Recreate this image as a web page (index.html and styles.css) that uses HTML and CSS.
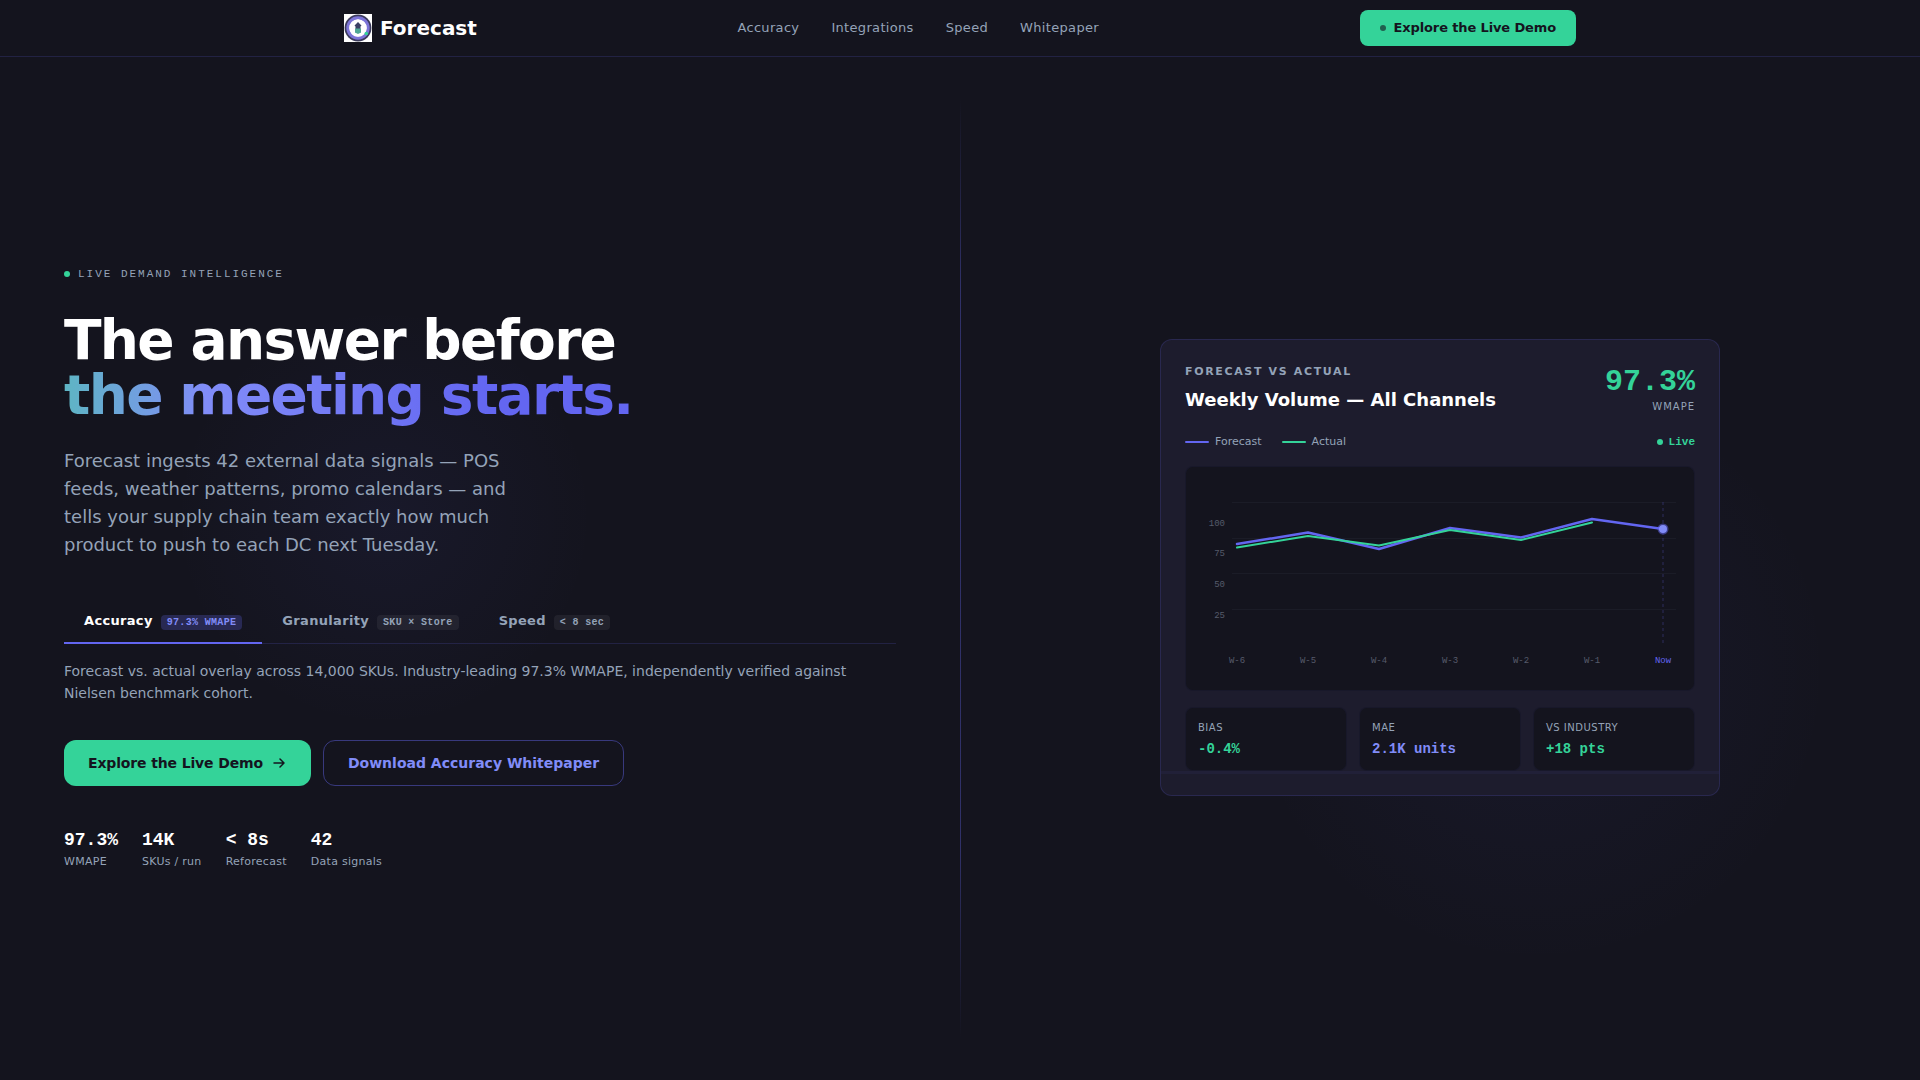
FILE: index.html
```
<!DOCTYPE html>
<html lang="en">
<head>
  <meta charset="UTF-8" />
  <meta name="viewport" content="width=device-width, initial-scale=1.0" />
  <title>Forecast</title>
  <link rel="stylesheet" href="styles.css">
</head>
<body>
  <header class="nav">
    <div class="nav-inner">
      <a href="#" class="brand">
        <svg class="logo" viewBox="0 0 28 28" aria-hidden="true">
          <rect width="28" height="28" fill="#ffffff"/>
          <circle cx="14" cy="14" r="13.4" fill="#3b3b5c"/>
          <circle cx="14" cy="14" r="10.2" fill="#ffffff" stroke="#7c74d8" stroke-width="3"/>
          <circle cx="14" cy="14" r="8.6" fill="#ffffff"/>
          <path d="M14 8l3.500 3.500-1 1v6h-5v-6l-1-1z" fill="#3b4064"/>
          <path d="M11 14.500h6v4L14 20l-3-1.500z" fill="#4fa896"/>
          <circle cx="22.300" cy="19.500" r="1.800" fill="#34d399"/>
        </svg>
        <span>Forecast</span>
      </a>
      <nav class="nav-links">
        <a href="#accuracy">Accuracy</a>
        <a href="#integrations">Integrations</a>
        <a href="#speed">Speed</a>
        <a href="#whitepaper">Whitepaper</a>
      </nav>
      <button class="nav-cta" type="button"><i class="cta-dot"></i>Explore the Live Demo</button>
    </div>
  </header>

  <main class="hero">
    <section class="hero-left">
      <div class="eyebrow"><i class="dot"></i>LIVE DEMAND INTELLIGENCE</div>
      <h1>The answer before<br><span class="gradient">the meeting starts.</span></h1>
      <p class="lead">Forecast ingests 42 external data signals — POS feeds, weather patterns, promo calendars — and tells your supply chain team exactly how much product to push to each DC next Tuesday.</p>

      <div class="tabs" role="tablist">
        <button class="tab active" type="button" role="tab" aria-selected="true">Accuracy<span class="badge">97.3% WMAPE</span></button>
        <button class="tab" type="button" role="tab" aria-selected="false">Granularity<span class="badge">SKU × Store</span></button>
        <button class="tab" type="button" role="tab" aria-selected="false">Speed<span class="badge">&lt; 8 sec</span></button>
      </div>
      <p class="tab-text">Forecast vs. actual overlay across 14,000 SKUs. Industry-leading 97.3% WMAPE, independently verified against Nielsen benchmark cohort.</p>

      <div class="actions">
        <button class="btn primary" type="button">Explore the Live Demo
          <svg width="16" height="16" viewBox="0 0 16 16" fill="none" stroke="currentColor" stroke-width="1.500" stroke-linecap="round" stroke-linejoin="round" aria-hidden="true"><path d="M3 8h10M9 4l4 4-4 4"/></svg>
        </button>
        <button class="btn outline" type="button">Download Accuracy Whitepaper</button>
      </div>

      <dl class="stats">
        <div><dd>97.3%</dd><dt>WMAPE</dt></div>
        <div><dd>14K</dd><dt>SKUs / run</dt></div>
        <div><dd>&lt; 8s</dd><dt>Reforecast</dt></div>
        <div><dd>42</dd><dt>Data signals</dt></div>
      </dl>
    </section>

    <section class="hero-right">
      <article class="card">
        <div class="card-head">
          <div>
            <div class="card-label">FORECAST VS ACTUAL</div>
            <h2>Weekly Volume — All Channels</h2>
          </div>
          <div class="score">
            <strong>97.3%</strong>
            <span>WMAPE</span>
          </div>
        </div>

        <div class="legend">
          <span class="key"><i class="line forecast"></i>Forecast</span>
          <span class="key"><i class="line actual"></i>Actual</span>
          <span class="live"><i class="dot"></i>Live</span>
        </div>

        <div class="chart">
          <svg viewBox="0 0 508 223" role="img" aria-label="Forecast and actual volume by week">
            <g class="grid">
              <path d="M46 35.500H490M46 71.500H490M46 106.500H490M46 142.500H490"/>
            </g>
            <path class="now-line" d="M477 35V179"/>
            <g class="y-axis">
              <text x="39" y="59">100</text>
              <text x="39" y="89">75</text>
              <text x="39" y="120">50</text>
              <text x="39" y="151">25</text>
            </g>
            <g class="x-axis">
              <text x="51" y="196">W-6</text>
              <text x="122" y="196">W-5</text>
              <text x="193" y="196">W-4</text>
              <text x="264" y="196">W-3</text>
              <text x="335" y="196">W-2</text>
              <text x="406" y="196">W-1</text>
              <text class="now" x="477" y="196">Now</text>
            </g>
            <polyline class="series forecast" points="51,77 122,65.500 193,82 264,61 335,70.500 406,52 477,62"/>
            <polyline class="series actual" points="51,80.500 122,69 193,78.500 264,63 335,73 406,55.500"/>
            <circle class="halo" cx="477" cy="62" r="5.500"/>
            <circle class="point" cx="477" cy="62" r="4"/>
          </svg>
        </div>

        <dl class="metrics">
          <div><dt>BIAS</dt><dd>-0.4%</dd></div>
          <div><dt>MAE</dt><dd class="violet">2.1K units</dd></div>
          <div><dt>VS INDUSTRY</dt><dd>+18 pts</dd></div>
        </dl>
      </article>
    </section>
  </main>
</body>
</html>
```
FILE: styles.css
```
:root {
  --bg: #14141e;
  --card: #1d1c2d;
  --green: #34d399;
  --indigo: #6366f1;
  --violet: #818cf8;
  --muted: #94a3b8;
  --border: rgba(99, 102, 241, 0.18);
  --sans: "DejaVu Sans", sans-serif;
  --mono: "Liberation Mono", monospace;
}

* {
  box-sizing: border-box;
  margin: 0;
  padding: 0;
}

body {
  min-height: 100vh;
  display: flex;
  flex-direction: column;
  background: var(--bg);
  color: #ffffff;
  font-family: var(--sans);
}

a {
  color: inherit;
  text-decoration: none;
}

button {
  border: none;
  background: none;
  color: inherit;
  font-family: inherit;
  cursor: pointer;
}

/* Navigation */
.nav {
  border-bottom: 1px solid var(--border);
}

.nav-inner {
  max-width: 1280px;
  height: 56px;
  margin: 0 auto;
  padding: 0 24px;
  display: flex;
  align-items: center;
  justify-content: space-between;
}

.brand {
  display: flex;
  align-items: center;
  gap: 8px;
  font-size: 20px;
  font-weight: 700;
}

.logo {
  width: 28px;
  height: 28px;
}

.nav-links {
  display: flex;
  gap: 32px;
  color: var(--muted);
  font-size: 13px;
  line-height: 18px;
  letter-spacing: 0.025em;
}

.nav-cta {
  display: flex;
  align-items: center;
  gap: 8px;
  height: 36px;
  padding: 0 20px;
  border-radius: 8px;
  background: var(--green);
  color: var(--bg);
  font-size: 13px;
  font-weight: 700;
  line-height: 18px;
  letter-spacing: -0.01em;
}

.cta-dot {
  width: 6px;
  height: 6px;
  border-radius: 50%;
  background: var(--bg);
  opacity: 0.6;
}

/* Hero */
.hero {
  flex: 1;
  display: grid;
  grid-template-columns: 1fr 1fr;
  position: relative;
  background:
    radial-gradient(circle 300px at 20% 45%, rgba(99, 102, 241, 0.06), transparent 70%),
    radial-gradient(circle 420px at 80% 60%, rgba(99, 102, 241, 0.06), transparent 70%);
}

.hero::after {
  content: "";
  position: absolute;
  top: 4%;
  bottom: 4%;
  left: 50%;
  width: 1px;
  background: linear-gradient(transparent, rgba(99, 102, 241, 0.35) 20%, rgba(99, 102, 241, 0.35) 80%, transparent);
}

.hero-left {
  display: flex;
  flex-direction: column;
  justify-content: center;
  padding: 48px 64px 49px;
}

.hero-right {
  display: flex;
  align-items: center;
  justify-content: center;
  padding: 48px 64px 50px;
}

.dot {
  width: 6px;
  height: 6px;
  border-radius: 50%;
  background: var(--green);
}

.eyebrow {
  display: flex;
  align-items: center;
  gap: 8px;
  margin-bottom: 32px;
  color: var(--muted);
  font-family: var(--mono);
  font-size: 11px;
  line-height: 14px;
  letter-spacing: 0.18em;
}

h1 {
  margin-bottom: 24px;
  font-size: 55px;
  font-weight: 700;
  line-height: 55px;
  letter-spacing: -0.03em;
}

.gradient {
  background: linear-gradient(90deg, #5eb5c4, #818cf8 25%, #6366f1 75%);
  -webkit-background-clip: text;
  background-clip: text;
  color: transparent;
}

.lead {
  max-width: 460px;
  margin-bottom: 41px;
  color: var(--muted);
  font-size: 18px;
  line-height: 28px;
}

.tabs {
  display: flex;
  border-bottom: 1px solid var(--border);
}

.tab {
  display: flex;
  align-items: baseline;
  gap: 8px;
  margin-bottom: -1px;
  padding: 12px 20px;
  border-bottom: 2px solid transparent;
  color: var(--muted);
  font-size: 13px;
  font-weight: 700;
  line-height: 18px;
  letter-spacing: 0.025em;
}

.tab.active {
  border-bottom-color: var(--indigo);
  color: #ffffff;
}

.badge {
  padding: 0 6px;
  border-radius: 4px;
  background: rgba(255, 255, 255, 0.06);
  font-family: var(--mono);
  font-size: 10px;
  line-height: 15px;
}

.tab.active .badge {
  background: rgba(99, 102, 241, 0.25);
  color: var(--violet);
}

.tab-text {
  padding: 16px 0 36px;
  color: var(--muted);
  font-size: 14px;
  line-height: 22px;
}

.actions {
  display: flex;
  gap: 12px;
  margin-bottom: 40px;
}

.btn {
  display: flex;
  align-items: center;
  gap: 8px;
  height: 46px;
  padding: 0 24px;
  border-radius: 12px;
  font-size: 14px;
  font-weight: 700;
}

.btn.primary {
  background: var(--green);
  color: var(--bg);
  letter-spacing: -0.01em;
}

.btn.outline {
  border: 1px solid rgba(99, 102, 241, 0.45);
  color: var(--violet);
}

.stats {
  display: flex;
  gap: 24px;
}

.stats dd {
  font-family: var(--mono);
  font-size: 18px;
  font-weight: 700;
  line-height: 28px;
}

.stats dt {
  color: var(--muted);
  font-size: 11px;
  line-height: 16px;
  letter-spacing: 0.025em;
}

/* Forecast card */
.card {
  position: relative;
  width: 100%;
  max-width: 560px;
  padding: 24px;
  border: 1px solid var(--border);
  border-radius: 12px;
  background: var(--card);
}

.card::after {
  content: "";
  position: absolute;
  right: 0;
  bottom: 21px;
  left: 0;
  height: 3px;
  background: rgba(99, 102, 241, 0.06);
}

.card-head {
  display: flex;
  justify-content: space-between;
  margin-bottom: 20px;
}

.card-label {
  margin-bottom: 8px;
  color: var(--muted);
  font-size: 11px;
  font-weight: 700;
  line-height: 16px;
  letter-spacing: 0.15em;
}

h2 {
  font-size: 18px;
  line-height: 24px;
}

.score {
  text-align: right;
}

.score strong {
  display: block;
  color: var(--green);
  font-family: var(--mono);
  font-size: 30px;
  line-height: 36px;
}

.score span {
  display: block;
  color: var(--muted);
  font-size: 10px;
  line-height: 14px;
  letter-spacing: 0.1em;
}

.legend {
  display: flex;
  align-items: center;
  gap: 20px;
  margin-bottom: 16px;
  color: var(--muted);
  font-size: 11px;
  line-height: 16px;
}

.key,
.live {
  display: flex;
  align-items: center;
  gap: 6px;
}

.line {
  width: 24px;
  height: 2px;
  border-radius: 1px;
}

.line.forecast {
  background: var(--indigo);
}

.line.actual {
  background: var(--green);
}

.live {
  margin-left: auto;
  color: var(--green);
  font-family: var(--mono);
  font-weight: 700;
}

.chart {
  margin-bottom: 16px;
  border: 1px solid rgba(99, 102, 241, 0.06);
  border-radius: 8px;
  background: var(--bg);
}

.chart svg {
  display: block;
  width: 100%;
}

.chart text {
  fill: #565b6b;
  font-family: var(--mono);
  font-size: 9px;
}

.y-axis {
  text-anchor: end;
}

.x-axis {
  text-anchor: middle;
}

.chart .now {
  fill: var(--indigo);
}

.grid {
  stroke: rgba(148, 163, 184, 0.06);
}

.now-line {
  stroke: rgba(99, 102, 241, 0.3);
  stroke-dasharray: 3 3;
}

.series {
  fill: none;
  stroke-width: 2;
  stroke-linecap: round;
  stroke-linejoin: round;
}

.series.forecast {
  stroke: var(--indigo);
  stroke-width: 2.5;
}

.series.actual {
  stroke: var(--green);
}

.halo {
  fill: var(--indigo);
  opacity: 0.5;
}

.point {
  fill: var(--violet);
}

.metrics {
  display: grid;
  grid-template-columns: repeat(3, 1fr);
  gap: 12px;
}

.metrics div {
  padding: 12px;
  border: 1px solid rgba(99, 102, 241, 0.06);
  border-radius: 8px;
  background: var(--bg);
}

.metrics dt {
  color: var(--muted);
  font-size: 10px;
  line-height: 16px;
  letter-spacing: 0.05em;
}

.metrics dd {
  margin-top: 4px;
  color: var(--green);
  font-family: var(--mono);
  font-size: 14px;
  font-weight: 700;
  line-height: 18px;
}

.metrics .violet {
  color: var(--violet);
}
```
